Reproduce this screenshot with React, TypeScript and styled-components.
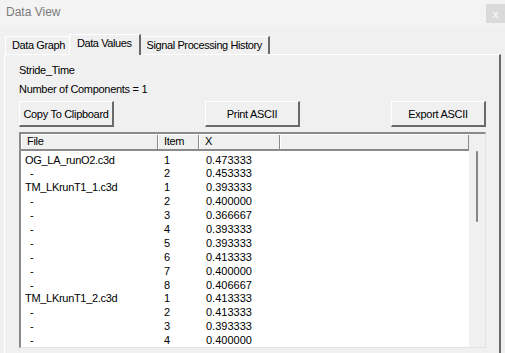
import styled, { createGlobalStyle } from "styled-components";

const GlobalStyle = createGlobalStyle`
  html, body {
    margin: 0;
    padding: 0;
    background: #f0f0f0;
    overflow: hidden;
  }
  body {
    font-family: "Liberation Sans", Arial, sans-serif;
    font-size: 11px;
    letter-spacing: -0.3px;
    color: #000;
  }
`;

const rows = [
  { file: "OG_LA_runO2.c3d", item: 1, x: "0.473333" },
  { file: "-", item: 2, x: "0.453333" },
  { file: "TM_LKrunT1_1.c3d", item: 1, x: "0.393333" },
  { file: "-", item: 2, x: "0.400000" },
  { file: "-", item: 3, x: "0.366667" },
  { file: "-", item: 4, x: "0.393333" },
  { file: "-", item: 5, x: "0.393333" },
  { file: "-", item: 6, x: "0.413333" },
  { file: "-", item: 7, x: "0.400000" },
  { file: "-", item: 8, x: "0.406667" },
  { file: "TM_LKrunT1_2.c3d", item: 1, x: "0.413333" },
  { file: "-", item: 2, x: "0.413333" },
  { file: "-", item: 3, x: "0.393333" },
  { file: "-", item: 4, x: "0.400000" },
];

const tabs = ["Data Graph", "Data Values", "Signal Processing History"];

const Window = styled.div`
  width: 505px;
  height: 353px;
  display: flex;
  flex-direction: column;
  overflow: hidden;
`;

const TitleBar = styled.div`
  height: 27px;
  flex: none;
  display: flex;
  align-items: flex-start;
  justify-content: space-between;
  background: #f3f3f3;
`;

const Title = styled.span`
  margin: 5px 0 0 6px;
  font-size: 12px;
  letter-spacing: 0;
  color: #7b7b7b;
`;

const CloseButton = styled.div`
  width: 19px;
  height: 19px;
  margin: 4px 0 0 0;
  background: #dadada;
  color: #f4f4f4;
  font-size: 11px;
  font-weight: bold;
  display: flex;
  align-items: center;
  justify-content: center;
`;

const TabStrip = styled.div`
  display: flex;
  align-items: flex-end;
  padding: 7px 0 0 5px;
  height: 20px;
  flex: none;
`;

const Tab = styled.div<{ $active?: boolean; $last?: boolean }>`
  box-sizing: border-box;
  height: ${(p) => (p.$active ? 21 : 18)}px;
  padding: ${(p) => (p.$active ? "1px 7px 0 7px" : "1px 6px 0 6px")};
  margin: ${(p) => (p.$active ? "0 -1px -1px -2px" : "0")};
  border-top: 1px solid #fff;
  border-left: 1px solid #fff;
  border-right: ${(p) =>
    p.$active || p.$last ? "2px solid #696969" : "none"};
  background: #f0f0f0;
  font-size: 11px;
  letter-spacing: -0.4px;
  line-height: 15px;
  white-space: nowrap;
  position: relative;
  z-index: ${(p) => (p.$active ? 1 : 0)};
`;

const Panel = styled.div`
  flex: 1;
  margin: 0 4px 0 4px;
  border-top: 1px solid #fff;
  border-left: 1px solid #fff;
  border-right: 2px solid #696969;
  padding: 8px 13px 0 14px;
  display: flex;
  flex-direction: column;
`;

const Label = styled.div`
  height: 19px;
  line-height: 14px;
`;

const ButtonRow = styled.div`
  display: flex;
  justify-content: space-between;
  height: 26px;
`;

const Button = styled.div`
  box-sizing: border-box;
  width: 95px;
  height: 26px;
  border-top: 1px solid #fff;
  border-left: 1px solid #fff;
  border-right: 2px solid #696969;
  border-bottom: 2px solid #696969;
  background: #f0f0f0;
  display: flex;
  align-items: center;
  justify-content: center;
  white-space: nowrap;
`;

const ListView = styled.div`
  margin-top: 5px;
  height: 216px;
  box-sizing: border-box;
  border-top: 2px solid #8a8a8a;
  border-left: 2px solid #8a8a8a;
  border-right: 1px solid #e3e3e3;
  border-bottom: 1px solid #e3e3e3;
  display: flex;
  background: #fff;
`;

const ListMain = styled.div`
  flex: 1;
  display: flex;
  flex-direction: column;
`;

const Header = styled.div`
  display: grid;
  grid-template-columns: 137px 41px 81px 1fr;
  height: 17px;
  box-sizing: border-box;
  background: #f0f0f0;
  border-bottom: 2px solid #8a8a8a;
  border-top: 1px solid #fff;
`;

const HeaderCell = styled.div`
  box-sizing: border-box;
  padding-left: 6px;
  line-height: 13px;
  border-right: 1px solid #8a8a8a;
  box-shadow: inset 1px 0 0 #fff;
`;

const Body = styled.div`
  padding-top: 2px;
`;

const Row = styled.div`
  display: grid;
  grid-template-columns: 137px 41px 81px;
  height: 13.9px;
  line-height: 14px;
`;

const Cell = styled.div<{ $pad: number; $num?: boolean }>`
  padding-left: ${(p) => p.$pad}px;
  white-space: nowrap;
  letter-spacing: ${(p) => (p.$num ? "0" : "-0.3px")};
`;

const ScrollTrack = styled.div`
  width: 16px;
  flex: none;
  background: #f0f0f0;
  position: relative;
`;

const ScrollThumb = styled.div`
  position: absolute;
  left: 7px;
  top: 17px;
  width: 2px;
  height: 71px;
  border-radius: 1px;
  background: #858585;
`;

export default function App() {
  return (
    <>
      <GlobalStyle />
      <Window>
        <TitleBar>
          <Title>Data View</Title>
          <CloseButton>x</CloseButton>
        </TitleBar>
        <TabStrip>
          {tabs.map((t, i) => (
            <Tab key={t} $active={i === 1} $last={i === tabs.length - 1}>
              {t}
            </Tab>
          ))}
        </TabStrip>
        <Panel>
          <Label>Stride_Time</Label>
          <Label>Number of Components = 1</Label>
          <ButtonRow>
            <Button>Copy To Clipboard</Button>
            <Button>Print ASCII</Button>
            <Button>Export ASCII</Button>
          </ButtonRow>
          <ListView>
            <ListMain>
              <Header>
                <HeaderCell>File</HeaderCell>
                <HeaderCell>Item</HeaderCell>
                <HeaderCell>X</HeaderCell>
                <HeaderCell />
              </Header>
              <Body>
                {rows.map((r, i) => (
                  <Row key={i}>
                    <Cell $pad={r.file === "-" ? 9 : 4}>{r.file}</Cell>
                    <Cell $pad={6} $num>
                      {r.item}
                    </Cell>
                    <Cell $pad={7} $num>
                      {r.x}
                    </Cell>
                  </Row>
                ))}
              </Body>
            </ListMain>
            <ScrollTrack>
              <ScrollThumb />
            </ScrollTrack>
          </ListView>
        </Panel>
      </Window>
    </>
  );
}
